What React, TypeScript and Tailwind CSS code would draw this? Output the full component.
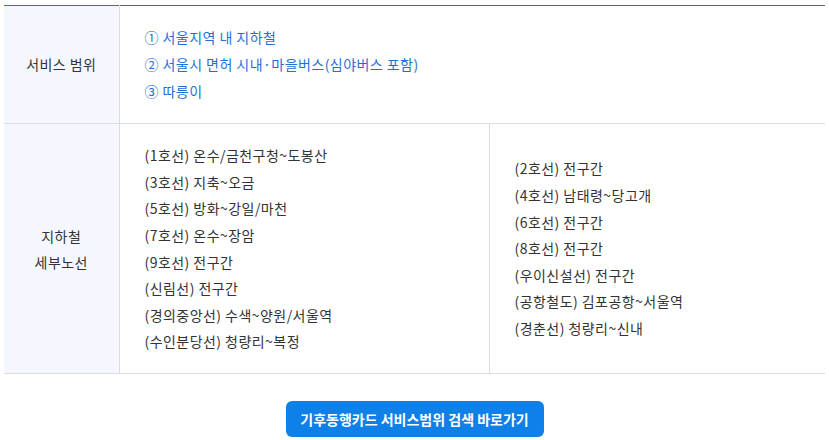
import React from "react";

const leftLines = [
  ["(1호선)", "온수/금천구청~도봉산"],
  ["(3호선)", "지축~오금"],
  ["(5호선)", "방화~강일/마천"],
  ["(7호선)", "온수~장암"],
  ["(9호선)", "전구간"],
  ["(신림선)", "전구간"],
  ["(경의중앙선)", "수색~양원/서울역"],
  ["(수인분당선)", "청량리~복정"],
];

const rightLines = [
  ["(2호선)", "전구간"],
  ["(4호선)", "남태령~당고개"],
  ["(6호선)", "전구간"],
  ["(8호선)", "전구간"],
  ["(우이신설선)", "전구간"],
  ["(공항철도)", "김포공항~서울역"],
  ["(경춘선)", "청량리~신내"],
];

const LineList = ({ items }: { items: string[][] }) => (
  <ul className="leading-[26.6px]">
    {items.map(([name, range]) => (
      <li key={name}>
        {name} {range}
      </li>
    ))}
  </ul>
);

const App = () => {
  return (
    <div
      className="w-[829px] h-[440px] bg-white px-[4px] pt-[5px] text-[14px] text-[#333333] tracking-[0.45px] overflow-hidden"
      style={{ fontFamily: '"Noto Sans CJK KR", "Noto Sans", sans-serif' }}
    >
      <table className="w-full table-fixed border-collapse border-t border-[#2b6fd0]">
        <colgroup>
          <col className="w-[115px]" />
          <col className="w-[370px]" />
          <col />
        </colgroup>
        <tbody>
          {/* 서비스 범위 */}
          <tr className="border-b border-[#dddddd]">
            <th className="bg-[#f4f8fe] border-r border-[#dddddd] font-normal text-center h-[117px]">
              서비스 범위
            </th>
            <td colSpan={2} className="pl-[25px] py-[18px] text-[#1f6fd6] leading-[27px]">
              <p>① 서울지역 내 지하철</p>
              <p>② 서울시 면허 시내·마을버스(심야버스 포함)</p>
              <p>③ 따릉이</p>
            </td>
          </tr>

          {/* 지하철 세부노선 */}
          <tr className="border-b border-[#dddddd]">
            <th className="bg-[#f4f8fe] border-r border-[#dddddd] font-normal text-center leading-[26px] h-[250px]">
              지하철
              <br />
              세부노선
            </th>
            <td className="pl-[25px] py-[18px] border-r border-[#dddddd] align-middle">
              <LineList items={leftLines} />
            </td>
            <td className="pl-[25px] py-[18px] align-middle">
              <LineList items={rightLines} />
            </td>
          </tr>
        </tbody>
      </table>

      <div className="flex justify-center mt-[27px]">
        <a
          href="#"
          className="w-[258px] h-[36px] rounded-[6px] bg-[#0e80e8] text-white font-bold text-[14px] tracking-normal flex items-center justify-center"
        >
          기후동행카드 서비스범위 검색 바로가기
        </a>
      </div>
    </div>
  );
};

export default App;
